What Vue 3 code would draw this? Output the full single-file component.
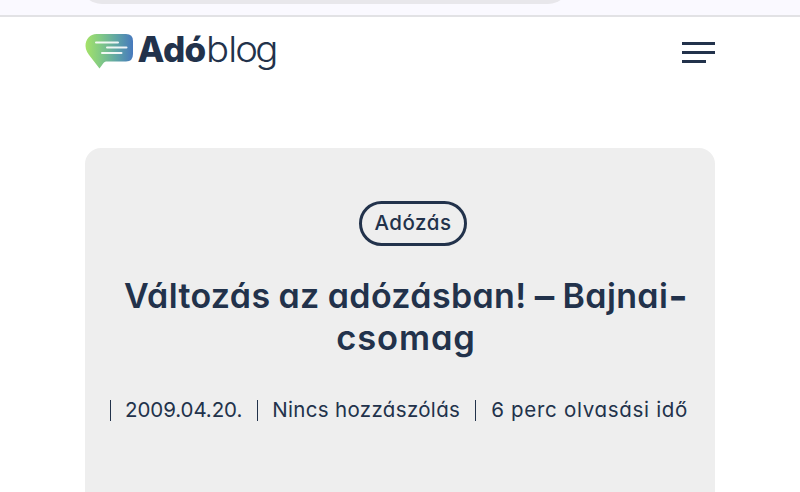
<script setup>
const meta = [
  { text: '2009.04.20.', kind: 'date' },
  { text: 'Nincs hozzászólás', kind: 'comments' },
  { text: '6 perc olvasási idő', kind: 'reading' },
]
</script>

<template>
  <div class="page">
    <div class="browser"><div class="address"></div></div>
    <header class="header">
      <svg class="logo" width="196" height="54" viewBox="84 23 196 54" role="img" aria-label="Adóblog">
        <defs>
          <linearGradient id="bubble" x1="0" y1="0" x2="1" y2="0">
            <stop offset="0" stop-color="#a5e268" />
            <stop offset="0.3" stop-color="#83cb83" />
            <stop offset="0.65" stop-color="#5fa5a5" />
            <stop offset="1" stop-color="#4779bd" />
          </linearGradient>
        </defs>
        <path d="M96.5 34H126Q133 34 133 41V54Q133 61.5 126 61.5H106Q104.500 61.500 103.500 63L99.500 68.500L91 57.500C88 54 85.500 50 85.500 46C85.500 39 90 34 96.500 34Z" fill="url(#bubble)" />
        <path d="M96 42.500H118M107 47.500H126.500M102 53H121.500" stroke="#fff" stroke-width="2" stroke-linecap="round" opacity=".9" />
        <text class="bold" transform="translate(137.500 61.500)" x="0 25.500 47" y="0">Adó</text>
        <text class="light" transform="translate(206 61.500) scale(1.08 1)" x="0 20.500 27 45.500" y="0">blog</text>
      </svg>
      <div class="menu"><span></span><span></span><span class="short"></span></div>
    </header>
    <main class="card">
      <a class="tag"><span>Adózás</span></a>
      <h1><span class="first">Változás az adózásban! <span class="dash">–</span> Bajnai<span class="hyphen">-</span></span><span class="second">csomag</span></h1>
      <ul class="meta">
        <li v-for="item in meta" :key="item.kind"><span :class="item.kind">{{ item.text }}</span></li>
      </ul>
    </main>
  </div>
</template>

<style>
body { background: #fff; overflow: hidden; }
</style>

<style scoped>
.page { height: 492px; overflow: hidden; color: #22324b; font-family: Inter, sans-serif; font-feature-settings: "cv11"; }
.browser { box-sizing: border-box; height: 17px; background: #faf9ff; border-bottom: 2px solid #e2e2e5; overflow: hidden; }
.address { width: 490px; height: 44px; margin: -40px 0 0 80px; border-radius: 24px; background: #e8e7eb; }
.header { display: flex; justify-content: space-between; height: 131px; padding: 0 85px 0 84px; }
.logo { margin-top: 6px; overflow: visible; }
.bold { font-size: 35px; font-weight: 800; fill: #22324b; }
.light { font-size: 35.500px; font-weight: 300; fill: #22324b; }
.menu { display: flex; flex-direction: column; gap: 6px; margin-top: 25px; }
.menu span { width: 33px; height: 3px; background: #22324b; }
.menu .short { width: 24px; }
.card { display: flex; flex-direction: column; align-items: center; box-sizing: border-box; width: 630px; height: 370px; margin: 0 auto; padding: 53px 0 0; border-radius: 16px; background: #eee; }
.tag { display: flex; align-items: center; justify-content: center; box-sizing: border-box; width: 108px; height: 45px; margin-left: 26px; padding-bottom: 2px; border: 3px solid #22324b; border-radius: 23px; font-size: 20.500px; font-weight: 500; letter-spacing: .55px; }
h1 { display: flex; flex-direction: column; align-items: center; margin: 29px 0 0 12px; font-size: 34px; line-height: 42px; font-weight: 600; white-space: nowrap; }
.first { letter-spacing: .35px; word-spacing: -.8px; }
.dash, .hyphen { line-height: 0; }
.dash { font-size: 39px; vertical-align: -2px; }
.hyphen { font-size: 42px; vertical-align: -3px; }
.second { font-size: 34.500px; letter-spacing: .9px; }
.meta { display: flex; gap: 15px; align-self: stretch; margin: 41px 0 0; padding: 0 0 0 25px; list-style: none; font-size: 20.500px; line-height: 21px; white-space: nowrap; }
.meta li { height: 21px; padding-left: 14px; border-left: 1px solid #22324b; }
.meta span { display: block; line-height: 19px; }
.date { letter-spacing: -.08px; }
.comments { letter-spacing: .33px; }
.reading { margin-left: 1px; letter-spacing: .7px; }
</style>
